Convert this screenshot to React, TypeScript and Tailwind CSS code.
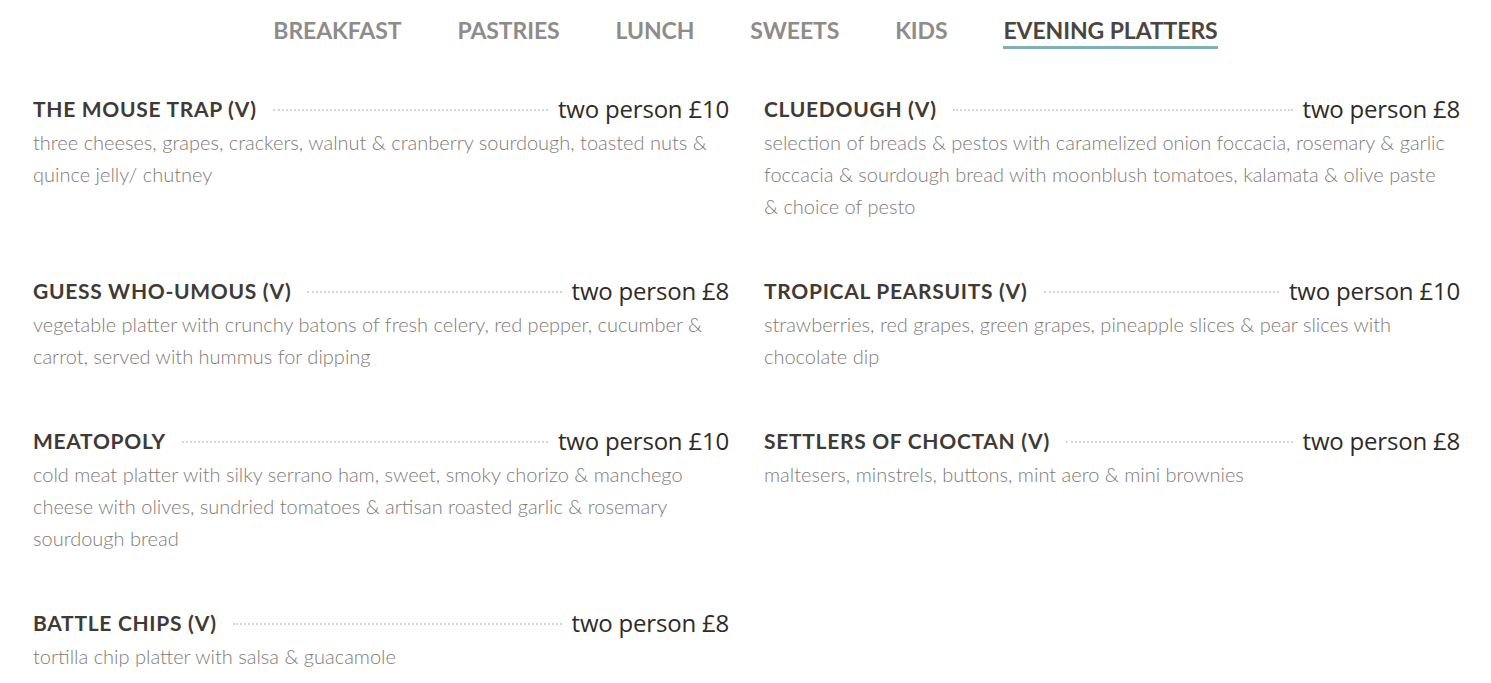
import React from "react";

type Item = {
  name: string;
  price: string;
  desc: string;
};

const tabs = ["Breakfast", "Pastries", "Lunch", "Sweets", "Kids", "Evening Platters"];

const items: Item[] = [
  {
    name: "The Mouse Trap (V)",
    price: "two person £10",
    desc: "three cheeses, grapes, crackers, walnut & cranberry sourdough, toasted nuts & quince jelly/ chutney",
  },
  {
    name: "Cluedough (V)",
    price: "two person £8",
    desc: "selection of breads & pestos with caramelized onion foccacia, rosemary & garlic foccacia & sourdough bread with moonblush tomatoes, kalamata & olive paste &\u00a0choice of pesto",
  },
  {
    name: "Guess Who-umous (V)",
    price: "two person £8",
    desc: "vegetable platter with crunchy batons of fresh celery, red pepper, cucumber & carrot, served with hummus for dipping",
  },
  {
    name: "Tropical Pearsuits (V)",
    price: "two person £10",
    desc: "strawberries, red grapes, green grapes, pineapple slices & pear slices with chocolate dip",
  },
  {
    name: "Meatopoly",
    price: "two person £10",
    desc: "cold meat platter with silky serrano ham, sweet, smoky chorizo & manchego cheese with olives, sundried tomatoes & artisan roasted garlic & rosemary sourdough bread",
  },
  {
    name: "Settlers of Choctan (V)",
    price: "two person £8",
    desc: "maltesers, minstrels, buttons, mint aero & mini brownies",
  },
  {
    name: "Battle Chips (V)",
    price: "two person £8",
    desc: "tortilla chip platter with salsa & guacamole",
  },
];

const MenuItem = ({ item }: { item: Item }) => (
  <div className="mb-[51px]">
    <div className="flex items-center h-[35px]">
      <h3 className="font-['Lato',sans-serif] font-bold text-[21px] uppercase text-[#403a36] whitespace-nowrap tracking-[0.7px]">
        {item.name}
      </h3>
      <div className="flex-1 ml-[16px] mr-[10px] border-t-2 border-dotted border-[#d6d6d6] translate-y-[1px]"></div>
      <span className="font-['Open_Sans',sans-serif] text-[24px] text-[#2f2b28] whitespace-nowrap tracking-[-0.2px]">
        {item.price}
      </span>
    </div>
    <p className="font-['Lato',sans-serif] font-light text-[20px] leading-[32px] text-[#7f7b77]">
      {item.desc}
    </p>
  </div>
);

export default function App() {
  return (
    <div className="min-h-screen bg-white">
      <nav className="flex justify-center gap-[56px] pt-[16px] h-[91px]">
        {tabs.map((tab) => {
          const active = tab === "Evening Platters";
          return (
            <div key={tab} className="flex flex-col items-stretch">
              <span
                className={
                  "font-['Lato',sans-serif] font-bold text-[23px] uppercase leading-[29px] tracking-[-0.1px] " +
                  (active ? "text-[#4a4541]" : "text-[#8e8c8a]")
                }
              >
                {tab}
              </span>
              {active && <div className="h-[3px] bg-[#7fb1b3] mt-[1px]"></div>}
            </div>
          );
        })}
      </nav>
      <div className="grid grid-cols-[696px_696px] gap-x-[35px] pl-[33px]">
        {items.map((item) => (
          <MenuItem key={item.name} item={item} />
        ))}
      </div>
    </div>
  );
}
